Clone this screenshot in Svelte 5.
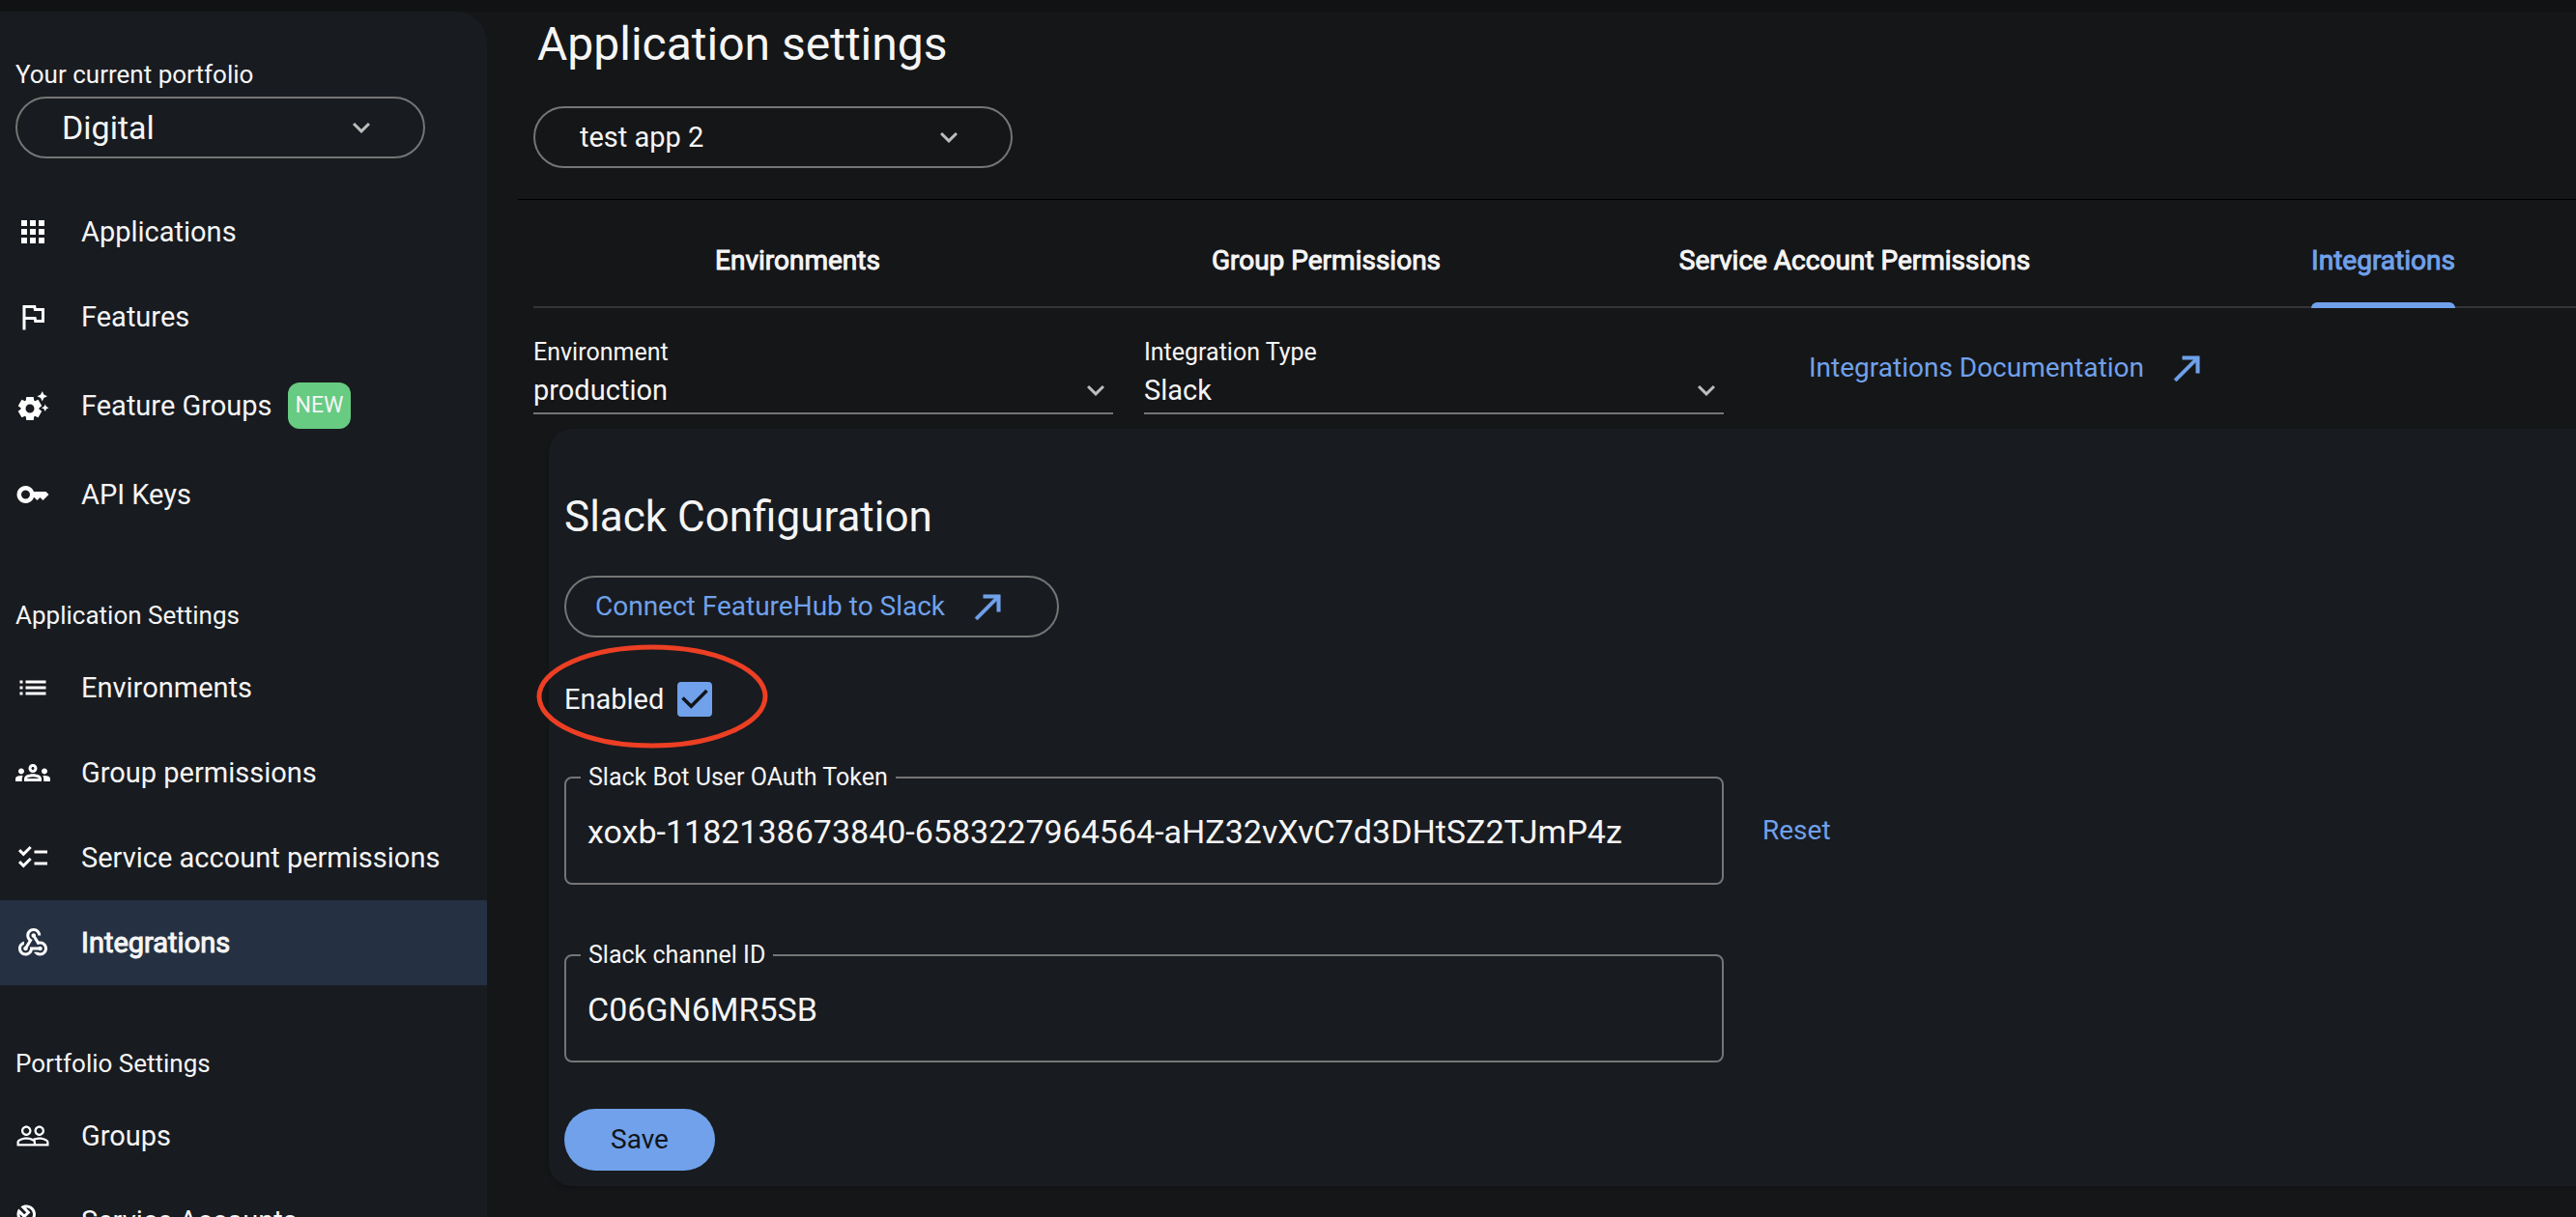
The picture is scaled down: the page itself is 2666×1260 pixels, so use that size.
<script>
  const icons = {
    apps: 'M4 8h4V4H4v4zm6 12h4v-4h-4v4zm-6 0h4v-4H4v4zm0-6h4v-4H4v4zm6 0h4v-4h-4v4zm6-10v4h4V4h-4zm-6 4h4V4h-4v4zm6 6h4v-4h-4v4zm0 6h4v-4h-4v4z',
    flag: 'M12.36 6l.4 2H18v6h-3.36l-.4-2H7V6h5.36M14 4H5v17h2v-7h5.6l.4 2h7V6h-5.6L14 4z',
    suggest:
      'M17.41 6.59 15 5.5l2.41-1.09L18.5 2l1.09 2.41L22 5.5l-2.41 1.09L18.5 9l-1.09-2.41zm3.87 6.13L20.5 11l-.78 1.72-1.72.78 1.72.78.78 1.72.78-1.72L23 13.5l-1.72-.78zm-5.04 1.65 1.94 1.47-2.5 4.33-2.24-.94c-.2.13-.42.26-.64.37l-.3 2.4h-5l-.3-2.41c-.22-.11-.43-.23-.64-.37l-2.24.94-2.5-4.33 1.94-1.47c-.01-.11-.01-.24-.01-.36s0-.25.01-.37l-1.94-1.47 2.5-4.33 2.24.94c.2-.13.42-.26.64-.37L7.5 6h5l.3 2.41c.22.11.43.23.64.37l2.24-.94 2.5 4.33-1.94 1.47c.01.12.01.24.01.37s0 .24-.01.36zM13 14c0-1.66-1.34-3-3-3s-3 1.34-3 3 1.34 3 3 3 3-1.34 3-3z',
    key: 'M21 10h-8.35C11.83 7.67 9.61 6 7 6c-3.31 0-6 2.69-6 6s2.69 6 6 6c2.61 0 4.83-1.67 5.65-4H13l2 2 2-2 2 2 4-4.04L21 10zM7 15c-1.65 0-3-1.35-3-3s1.35-3 3-3 3 1.35 3 3-1.35 3-3 3z',
    list: 'M3 13h2v-2H3v2zm0 4h2v-2H3v2zm0-8h2V7H3v2zm4 4h14v-2H7v2zm0 4h14v-2H7v2zM7 7v2h14V7H7z',
    groups:
      'M4 13c1.1 0 2-.9 2-2s-.9-2-2-2-2 .9-2 2 .9 2 2 2zm1.13 1.1c-.37-.06-.74-.1-1.13-.1-.99 0-1.93.21-2.78.58C.48 14.9 0 15.62 0 16.43V18h4.5v-1.61c0-.83.23-1.61.63-2.29zM20 13c1.1 0 2-.9 2-2s-.9-2-2-2-2 .9-2 2 .9 2 2 2zm4 3.43c0-.81-.48-1.53-1.22-1.85-.85-.37-1.79-.58-2.78-.58-.39 0-.76.04-1.13.1.4.68.63 1.46.63 2.29V18H24v-1.57zM12 12.75c1.63 0 3.07.39 4.24.9 1.08.48 1.76 1.56 1.76 2.73V18H6v-1.61c0-1.18.68-2.26 1.76-2.73 1.17-.52 2.61-.91 4.24-.91zM8.07 16h7.86c-.1-.23-.14-.39-.91-.69-.97-.38-1.99-.56-3.02-.56s-2.05.18-3.02.56c-.78.3-.82.46-.91.69zM12 6c1.66 0 3 1.34 3 3s-1.34 3-3 3-3-1.34-3-3 1.34-3 3-3zm0 2c-.55 0-1 .45-1 1s.45 1 1 1 1-.45 1-1-.45-1-1-1z',
    checklist:
      'M22 7h-9v2h9V7zm0 8h-9v2h9v-2zM5.54 11 2 7.46l1.41-1.41 2.12 2.12 4.24-4.24 1.41 1.41L5.54 11zm0 8L2 15.46l1.41-1.41 2.12 2.12 4.24-4.24 1.41 1.41L5.54 19z',
    webhook:
      'M10 15h5.88c.27-.31.67-.5 1.12-.5.83 0 1.5.67 1.5 1.5s-.67 1.5-1.5 1.5c-.44 0-.84-.19-1.12-.5H11.9c-.46 2.28-2.48 4-4.9 4-2.76 0-5-2.24-5-5 0-2.42 1.72-4.44 4-4.9v2.07C4.84 13.58 4 14.7 4 16c0 1.65 1.35 3 3 3s3-1.35 3-3v-1zm2.5-11c1.65 0 3 1.35 3 3h2c0-2.76-2.24-5-5-5s-5 2.24-5 5c0 1.43.6 2.71 1.55 3.62l-2.35 3.9c-.68.14-1.2.75-1.2 1.48 0 .83.67 1.5 1.5 1.5s1.5-.67 1.5-1.5c0-.16-.02-.31-.07-.45l3.38-5.63C10.49 9.61 9.5 8.42 9.5 7c0-1.65 1.35-3 3-3zm4.5 9c-.64 0-1.23.2-1.72.54l-3.05-5.07C11.53 8.35 11 7.74 11 7c0-.83.67-1.5 1.5-1.5S14 6.17 14 7c0 .15-.02.29-.06.43l2.19 3.65c.28-.05.57-.08.87-.08 2.76 0 5 2.24 5 5s-2.24 5-5 5c-1.85 0-3.47-1.01-4.33-2.5h2.67c.48.32 1.05.5 1.66.5 1.65 0 3-1.35 3-3s-1.35-3-3-3z',
    people:
      'M16.5 13c-1.2 0-3.07.34-4.5 1-1.43-.67-3.3-1-4.5-1C5.33 13 1 14.08 1 16.25V19h22v-2.75c0-2.17-4.33-3.25-6.5-3.25zm-4 4.5h-10v-1.25c0-.54 2.56-1.75 5-1.75s5 1.21 5 1.75v1.25zm9 0H14v-1.25c0-.46-.2-.86-.52-1.22.88-.3 1.96-.53 3.02-.53 2.44 0 5 1.21 5 1.75v1.25zM7.5 12c1.93 0 3.5-1.57 3.5-3.5S9.43 5 7.5 5 4 6.57 4 8.5 5.57 12 7.5 12zm0-5.5c1.1 0 2 .9 2 2s-.9 2-2 2-2-.9-2-2 .9-2 2-2zm9 5.5c1.93 0 3.5-1.57 3.5-3.5S18.43 5 16.5 5 13 6.57 13 8.5s1.57 3.5 3.5 3.5zm0-5.5c1.1 0 2 .9 2 2s-.9 2-2 2-2-.9-2-2 .9-2 2-2z',
    build:
      'M22.61 18.99l-9.08-9.08c.93-2.34.45-5.1-1.44-7C9.79.61 6.21.4 3.66 2.26L7.5 6.11 6.08 7.52 2.25 3.69C.39 6.23.6 9.82 2.9 12.11c1.86 1.86 4.57 2.35 6.89 1.48l9.11 9.11c.39.39 1.02.39 1.41 0l2.3-2.3c.4-.38.4-1.01 0-1.41zm-3 1.6l-9.46-9.46c-.61.45-1.29.72-2 .82-1.36.2-2.79-.21-3.83-1.25C3.37 9.76 2.93 8.5 3 7.26l3.09 3.09 4.24-4.24-3.09-3.09c1.24-.07 2.49.37 3.44 1.31 1.08 1.08 1.49 2.57 1.24 3.96-.12.71-.42 1.37-.88 1.96l9.45 9.45-.88.89z',
    chevron: 'M7.41 8.59 12 13.17l4.59-4.58L18 10l-6 6-6-6z',
    arrow: 'M9 5v2h6.59L4 18.59 5.41 20 17 8.41V15h2V5z'
  };

  const sections = [
    {
      title: null,
      items: [
        { label: 'Applications', icon: 'apps' },
        { label: 'Features', icon: 'flag' },
        { label: 'Feature Groups', icon: 'suggest', badge: 'NEW' },
        { label: 'API Keys', icon: 'key' }
      ]
    },
    {
      title: 'Application Settings',
      items: [
        { label: 'Environments', icon: 'list' },
        { label: 'Group permissions', icon: 'groups' },
        { label: 'Service account permissions', icon: 'checklist' },
        { label: 'Integrations', icon: 'webhook', active: true }
      ]
    },
    {
      title: 'Portfolio Settings',
      items: [
        { label: 'Groups', icon: 'people' },
        { label: 'Service Accounts', icon: 'build' }
      ]
    }
  ];

  const tabs = ['Environments', 'Group Permissions', 'Service Account Permissions', 'Integrations'];
  let currentTab = $state('Integrations');
  let enabled = $state(true);
  let token = $state('xoxb-1182138673840-6583227964564-aHZ32vXvC7d3DHtSZ2TJmP4z');
  let channel = $state('C06GN6MR5SB');
</script>

{#snippet icon(name, cls)}
  <svg class={cls} viewBox="0 0 24 24" fill="currentColor" fill-rule="evenodd" aria-hidden="true">
    <path d={icons[name]} />
  </svg>
{/snippet}

<div class="page">
  <div class="topbar"></div>
  <div class="body">
    <aside class="sidebar">
      <div class="portfolio">
        <label class="caption" for="portfolio">Your current portfolio</label>
        <div class="pill-select">
          <select id="portfolio" class="large"><option>Digital</option></select>
          {@render icon('chevron', 'chevron')}
        </div>
      </div>
      <nav>
        {#each sections as section}
          <div class="section">
            {#if section.title}<h2 class="caption section-title">{section.title}</h2>{/if}
            {#each section.items as item}
              <a class="nav-item" class:active={item.active} class:tall={item.badge} href="#{item.icon}">
                {@render icon(item.icon, 'nav-icon')}
                <span>{item.label}</span>
                {#if item.badge}<span class="badge">{item.badge}</span>{/if}
              </a>
            {/each}
          </div>
        {/each}
      </nav>
    </aside>

    <main>
      <header>
        <h1>Application settings</h1>
        <div class="pill-select app-select">
          <select aria-label="Application"><option>test app 2</option></select>
          {@render icon('chevron', 'chevron')}
        </div>
      </header>

      <div class="tabs" role="tablist">
        {#each tabs as tab}
          <button
            class="tab"
            class:selected={tab === currentTab}
            role="tab"
            aria-selected={tab === currentTab}
            onclick={() => (currentTab = tab)}><span>{tab}</span></button>
        {/each}
      </div>

      <div class="filters">
        <div class="filter">
          <label class="caption" for="environment">Environment</label>
          <div class="line-select">
            <select id="environment"><option>production</option></select>
            {@render icon('chevron', 'chevron')}
          </div>
        </div>
        <div class="filter">
          <label class="caption" for="type">Integration Type</label>
          <div class="line-select">
            <select id="type"><option>Slack</option></select>
            {@render icon('chevron', 'chevron')}
          </div>
        </div>
        <a class="link docs" href="#docs">Integrations Documentation {@render icon('arrow', 'arrow')}</a>
      </div>

      <section class="card">
        <h2 class="card-title">Slack Configuration</h2>
        <a class="link connect" href="#connect">Connect FeatureHub to Slack {@render icon('arrow', 'arrow')}</a>

        <div class="enabled">
          <label for="enabled">Enabled</label>
          <span class="check">
            <input id="enabled" type="checkbox" bind:checked={enabled} />
            {#if enabled}
              <svg class="tick" viewBox="0 0 36 36" fill="none" stroke="#121418" stroke-width="3.500" aria-hidden="true">
                <path d="M5.500 16.500 L14.300 25.300 L30.500 9" />
              </svg>
            {/if}
          </span>
          <svg class="ring" viewBox="0 0 240 108" fill="none" stroke="#ec3f24" stroke-width="5" aria-hidden="true">
            <ellipse cx="120" cy="54" rx="117" ry="51" />
          </svg>
        </div>

        <div class="row">
          <fieldset>
            <legend><label for="token">Slack Bot User OAuth Token</label></legend>
            <input id="token" type="text" bind:value={token} />
          </fieldset>
          <button class="link reset">Reset</button>
        </div>
        <div class="row">
          <fieldset>
            <legend><label for="channel">Slack channel ID</label></legend>
            <input id="channel" type="text" bind:value={channel} />
          </fieldset>
        </div>

        <button class="save">Save</button>
      </section>
    </main>
  </div>
</div>

<style>
  :global(body) {
    background: #151618;
  }

  .page {
    display: flex;
    flex-direction: column;
    height: 100vh;
    overflow: hidden;
    background: #151618;
    color: #f5f5f5;
    font-family: Roboto, 'Liberation Sans', sans-serif;
    font-size: 29px;
    line-height: 32px;
  }

  .page * {
    box-sizing: border-box;
  }

  .topbar {
    flex: none;
    height: 12px;
    background: #111214;
  }

  .body {
    display: flex;
    flex: 1;
    min-height: 0;
  }

  h1,
  h2 {
    margin: 0;
    font-weight: 400;
  }

  a {
    text-decoration: none;
    color: inherit;
  }

  button,
  select,
  input {
    margin: 0;
    font: inherit;
    color: inherit;
  }

  button {
    padding: 0;
    border: 0;
    background: none;
    cursor: pointer;
  }

  select {
    appearance: none;
    width: 100%;
    border: 0;
    padding: 0;
    background: none;
    outline: none;
  }

  .caption {
    display: block;
    font-size: 25px;
    line-height: 30px;
  }

  /* Sidebar */
  .sidebar {
    flex: none;
    width: 504px;
    overflow: hidden;
    background: #181b20;
    border-top-right-radius: 32px;
  }

  .sidebar .caption {
    font-size: 26px;
  }

  .portfolio {
    padding: 50px 64px 32px 16px;
  }

  .pill-select,
  .line-select {
    position: relative;
    display: flex;
    align-items: center;
  }

  .pill-select {
    height: 64px;
    border: 2px solid #757575;
    border-radius: 32px;
  }

  .portfolio .pill-select {
    margin-top: 8px;
  }

  .pill-select select {
    height: 100%;
    padding-left: 46px;
  }

  .large {
    font-size: 34px;
    line-height: 44px;
  }

  .chevron {
    position: absolute;
    right: 0;
    width: 36px;
    height: 36px;
    color: #bdbdbd;
    pointer-events: none;
  }

  .pill-select .chevron {
    right: 46px;
  }

  .section + .section {
    padding-top: 66px;
  }

  .section-title {
    padding: 0 16px 16px;
  }

  .nav-item {
    display: flex;
    align-items: center;
    height: 88px;
    padding: 0 16px;
    white-space: nowrap;
  }

  .nav-item.tall {
    height: 96px;
  }

  .nav-item.active {
    background: #253142;
    -webkit-text-stroke: 1px currentColor;
  }

  .nav-icon {
    flex: none;
    width: 36px;
    height: 36px;
    margin-right: 32px;
    color: #fff;
  }

  .badge {
    margin-left: 16px;
    padding: 8px;
    border-radius: 12px;
    background: #67cb82;
    font-size: 23px;
  }

  /* Main column */
  main {
    flex: 1;
    min-width: 0;
    padding-left: 32px;
    overflow: hidden;
  }

  header {
    padding: 4px 16px 32px;
    border-bottom: 1px solid #000;
  }

  h1 {
    padding-left: 4px;
    font-size: 48px;
    line-height: 60px;
  }

  .app-select {
    width: 496px;
    margin-top: 34px;
  }

  .tabs {
    display: grid;
    grid-template-columns: repeat(4, 1fr);
    height: 112px;
    margin: 0 -74px 0 16px;
    border-bottom: 2px solid #333537;
  }

  .tab {
    display: flex;
    justify-content: center;
    font-size: 28px;
    -webkit-text-stroke: 1px currentColor;
    white-space: nowrap;
  }

  .tab span {
    position: relative;
    height: 112px;
    padding-top: 47px;
  }

  .tab.selected span {
    color: #70a1ea;
  }

  .tab.selected span::after {
    content: '';
    position: absolute;
    inset: auto 0 0;
    height: 6px;
    border-radius: 6px 6px 0 0;
    background: #70a1ea;
  }

  .filters {
    display: flex;
    gap: 32px;
    height: 125px;
    padding: 31px 16px 0;
  }

  .filter {
    width: 600px;
  }

  .line-select {
    height: 49px;
    border-bottom: 2px solid #757575;
  }

  .link {
    color: #70a1ea;
    font-size: 28px;
    white-space: nowrap;
  }

  .docs {
    display: flex;
    align-items: center;
    align-self: flex-start;
    gap: 24px;
    margin: 10px 0 0 56px;
    height: 42px;
  }

  .arrow {
    width: 42px;
    height: 42px;
    stroke: currentColor;
    stroke-width: 0.3;
  }

  /* Configuration card */
  .card {
    display: flex;
    flex-direction: column;
    align-items: flex-start;
    margin: 0 -74px 0 32px;
    padding: 65px 16px 16px;
    border-radius: 24px;
    background: #181b20;
    box-shadow: 0 2px 4px rgba(0, 0, 0, 0.2);
  }

  .card-title {
    font-size: 44px;
    line-height: 52px;
  }

  .connect {
    display: flex;
    align-items: center;
    gap: 24px;
    height: 64px;
    margin-top: 35px;
    padding: 0 50px 0 30px;
    border: 2px solid #757575;
    border-radius: 32px;
  }

  .enabled {
    position: relative;
    display: flex;
    align-items: center;
    gap: 14px;
    height: 128px;
    margin-bottom: 3px;
  }

  .check {
    position: relative;
    display: flex;
  }

  .check input {
    appearance: none;
    width: 36px;
    height: 36px;
    border: 2px solid #70a1ea;
    border-radius: 4px;
  }

  .check input:checked {
    background: #70a1ea;
  }

  .tick {
    position: absolute;
    inset: 0;
    pointer-events: none;
  }

  .ring {
    position: absolute;
    left: -29px;
    top: 7px;
    width: 240px;
    height: 108px;
    pointer-events: none;
  }

  .row {
    display: flex;
    align-items: center;
    gap: 40px;
    width: 100%;
  }

  .row + .row {
    margin-top: 59px;
  }

  fieldset {
    width: 1200px;
    margin: 0;
    padding: 0 22px 11px;
    border: 2px solid #757575;
    border-radius: 8px;
  }

  legend {
    margin-left: -7px;
    padding: 0 8px;
    font-size: 25px;
    line-height: 28px;
  }

  fieldset input {
    display: block;
    width: 100%;
    height: 84px;
    padding: 0;
    border: 0;
    outline: none;
    background: none;
    font-size: 34px;
  }

  .reset {
    padding-top: 12px;
  }

  .save {
    height: 64px;
    margin-top: 48px;
    padding: 0 48px;
    border-radius: 32px;
    background: #70a1ea;
    color: #121418;
    font-size: 28px;
  }
</style>
